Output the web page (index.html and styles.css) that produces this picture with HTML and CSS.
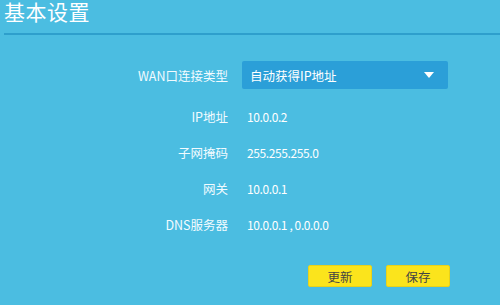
FILE: index.html
```html
<!DOCTYPE html>
<html lang="zh-CN">
<head>
    <meta charset="UTF-8">
    <title>基本设置</title>
    <link rel="stylesheet" href="styles.css">
</head>
<body>
    <div class="page">
        <h1 class="page-title">基本设置</h1>

        <!-- WAN 口基本设置 -->
        <div class="settings">
            <div class="row row-select">
                <span class="label">WAN口连接类型</span>
                <div class="select">
                    <span class="select-text">自动获得IP地址</span>
                    <span class="select-arrow"></span>
                </div>
            </div>
            <div class="row">
                <span class="label">IP地址</span>
                <span class="value">10.0.0.2</span>
            </div>
            <div class="row">
                <span class="label">子网掩码</span>
                <span class="value">255.255.255.0</span>
            </div>
            <div class="row">
                <span class="label">网关</span>
                <span class="value">10.0.0.1</span>
            </div>
            <div class="row">
                <span class="label">DNS服务器</span>
                <span class="value">10.0.0.1 , 0.0.0.0</span>
            </div>
        </div>

        <div class="actions">
            <button class="btn">更新</button>
            <button class="btn">保存</button>
        </div>
    </div>
</body>
</html>
```

FILE: styles.css
```css
body {
    margin: 0;
    background-color: #4bbde1;
    color: #fff;
    font-family: "Noto Sans CJK SC", "Noto Sans", sans-serif;
    height: 305px;
    overflow: hidden;
}

.page {
    padding-left: 4px;
}

.page-title {
    margin: 0;
    padding-top: 1px;
    font-size: 21px;
    font-weight: normal;
    line-height: 20px;
    height: 32px;
    letter-spacing: 0.5px;
    border-bottom: 2px solid #2e9fcc;
}

/* Lignes du formulaire */
.settings {
    margin-top: 26px;
}

.row {
    display: grid;
    grid-template-columns: 224px 206px;
    column-gap: 14px;
    align-items: center;
    height: 36px;
    font-size: 12.5px;
}

.row-select {
    height: 28px;
    margin-bottom: 9px;
}

.label {
    text-align: right;
    color: #f2fbff;
}

.value {
    padding-left: 5px;
    font-size: 12px;
    letter-spacing: -0.4px;
}

.select {
    display: flex;
    align-items: center;
    justify-content: space-between;
    height: 28px;
    padding: 0 14px 0 8px;
    background-color: #2b9fd8;
    border-radius: 2px;
}

.select-arrow {
    width: 0;
    height: 0;
    border-left: 5px solid transparent;
    border-right: 5px solid transparent;
    border-top: 6px solid #fff;
}

.actions {
    display: flex;
    justify-content: flex-end;
    gap: 14px;
    width: 446px;
    margin-top: 23px;
}

.btn {
    width: 64px;
    height: 22px;
    padding: 0;
    border: 1px solid #e8d21a;
    border-radius: 2px;
    background-color: #fbe41c;
    color: #444;
    font-family: inherit;
    font-size: 12.5px;
}
```
